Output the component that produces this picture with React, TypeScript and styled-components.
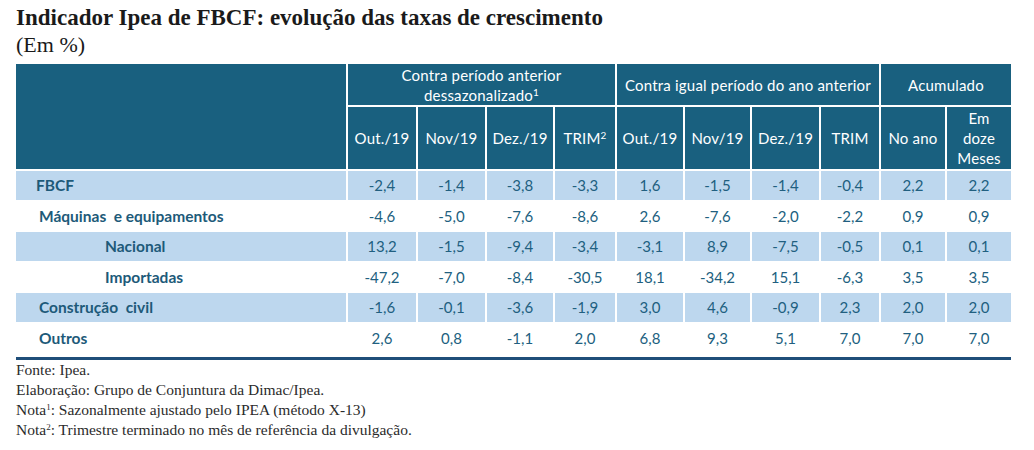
import React from 'react';
import styled, { createGlobalStyle } from 'styled-components';

const GlobalStyle = createGlobalStyle`
  html, body {
    margin: 0;
    padding: 0;
    background: #ffffff;
  }
`;

const Page = styled.div`
  width: 1034px;
  height: 450px;
  box-sizing: border-box;
  padding: 5px 23px 0 16px;
  overflow: hidden;
`;

const Title = styled.h1`
  margin: 0;
  font-family: 'Liberation Serif', 'DejaVu Serif', serif;
  font-weight: bold;
  font-size: 23px;
  line-height: 26px;
  color: #1a1a1a;
`;

const Subtitle = styled.div`
  font-family: 'Liberation Serif', 'DejaVu Serif', serif;
  font-size: 22px;
  line-height: 27px;
  color: #1a1a1a;
  margin-bottom: 6px;
`;

const Grid = styled.div`
  display: grid;
  grid-template-columns: 330px 68px 67px 66px 60px 66px 65px 67px 58px 64px 64px;
  grid-template-rows: 41px 62px repeat(6, 28.5px);
  column-gap: 2px;
  row-gap: 2px;
  font-family: Lato, 'Open Sans', sans-serif;
  font-size: 15px;
`;

const HeadCell = styled.div<{ $col: string; $row: string }>`
  grid-column: ${p => p.$col};
  grid-row: ${p => p.$row};
  background: #19607f;
  color: #ffffff;
  display: flex;
  align-items: center;
  justify-content: center;
  text-align: center;
  line-height: 20px;
  letter-spacing: 0.2px;

  sup {
    font-size: 10px;
    line-height: 0;
    vertical-align: 5px;
  }
`;

const LabelCell = styled.div<{ $shade: boolean; $indent: number }>`
  background: ${p => (p.$shade ? '#bdd7ee' : '#ffffff')};
  color: #1d5a79;
  font-weight: bold;
  font-size: 15.5px;
  display: flex;
  align-items: center;
  padding-left: ${p => p.$indent}px;
  white-space: pre;
`;

const NumCell = styled.div<{ $shade: boolean }>`
  background: ${p => (p.$shade ? '#bdd7ee' : '#ffffff')};
  color: #215f80;
  display: flex;
  align-items: center;
  justify-content: center;
`;

const BottomRule = styled.div`
  margin-top: 5px;
  height: 3px;
  width: 995px;
  background: #1f4e79;
`;

const Notes = styled.div`
  margin-top: 0;
  font-family: 'Liberation Serif', 'DejaVu Serif', serif;
  font-size: 15.5px;
  line-height: 20px;
  color: #2b2b2b;

  sup {
    font-size: 9px;
    line-height: 0;
    vertical-align: 5px;
  }
`;

const months = ['Out./19', 'Nov/19', 'Dez./19'];

const rows: { label: string; indent: number; values: string[] }[] = [
  { label: 'FBCF', indent: 20, values: ['-2,4', '-1,4', '-3,8', '-3,3', '1,6', '-1,5', '-1,4', '-0,4', '2,2', '2,2'] },
  { label: 'Máquinas  e equipamentos', indent: 23, values: ['-4,6', '-5,0', '-7,6', '-8,6', '2,6', '-7,6', '-2,0', '-2,2', '0,9', '0,9'] },
  { label: 'Nacional', indent: 89, values: ['13,2', '-1,5', '-9,4', '-3,4', '-3,1', '8,9', '-7,5', '-0,5', '0,1', '0,1'] },
  { label: 'Importadas', indent: 89, values: ['-47,2', '-7,0', '-8,4', '-30,5', '18,1', '-34,2', '15,1', '-6,3', '3,5', '3,5'] },
  { label: 'Construção  civil', indent: 23, values: ['-1,6', '-0,1', '-3,6', '-1,9', '3,0', '4,6', '-0,9', '2,3', '2,0', '2,0'] },
  { label: 'Outros', indent: 23, values: ['2,6', '0,8', '-1,1', '2,0', '6,8', '9,3', '5,1', '7,0', '7,0', '7,0'] },
];

export default function App() {
  return (
    <>
      <GlobalStyle />
      <Page>
        <Title>Indicador Ipea de FBCF: evolução das taxas de crescimento</Title>
        <Subtitle>(Em %)</Subtitle>
        <Grid>
          <HeadCell $col="1" $row="1 / 3" />
          <HeadCell $col="2 / 6" $row="1">
            <span>
              Contra período anterior
              <br />
              dessazonalizado<sup>1</sup>
            </span>
          </HeadCell>
          <HeadCell $col="6 / 10" $row="1">Contra igual período do ano anterior</HeadCell>
          <HeadCell $col="10 / 12" $row="1">Acumulado</HeadCell>
          {months.map((m, i) => (
            <HeadCell key={'a' + m} $col={String(i + 2)} $row="2">{m}</HeadCell>
          ))}
          <HeadCell $col="5" $row="2">
            <span>TRIM<sup>2</sup></span>
          </HeadCell>
          {months.map((m, i) => (
            <HeadCell key={'b' + m} $col={String(i + 6)} $row="2">{m}</HeadCell>
          ))}
          <HeadCell $col="9" $row="2">TRIM</HeadCell>
          <HeadCell $col="10" $row="2">No ano</HeadCell>
          <HeadCell $col="11" $row="2">
            <span>
              Em
              <br />
              doze
              <br />
              Meses
            </span>
          </HeadCell>
          {rows.map((r, ri) => (
            <React.Fragment key={r.label}>
              <LabelCell $shade={ri % 2 === 0} $indent={r.indent}>{r.label}</LabelCell>
              {r.values.map((v, vi) => (
                <NumCell key={vi} $shade={ri % 2 === 0}>{v}</NumCell>
              ))}
            </React.Fragment>
          ))}
        </Grid>
        <BottomRule />
        <Notes>
          <div>Fonte: Ipea.</div>
          <div>Elaboração: Grupo de Conjuntura da Dimac/Ipea.</div>
          <div>Nota<sup>1</sup>: Sazonalmente ajustado pelo IPEA (método X-13)</div>
          <div>Nota<sup>2</sup>: Trimestre terminado no mês de referência da divulgação.</div>
        </Notes>
      </Page>
    </>
  );
}
